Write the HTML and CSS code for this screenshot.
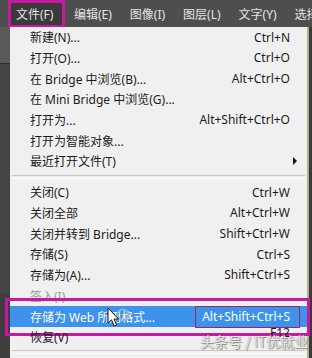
FILE: index.html
```html
<!DOCTYPE html>
<html>
<head>
<meta charset="utf-8">
<link rel="stylesheet" href="styles.css">
</head>
<body>
<div class="menubar">
  <div class="mb-item active">文件(F)</div>
  <div class="mb-item">编辑(E)</div>
  <div class="mb-item">图像(I)</div>
  <div class="mb-item">图层(L)</div>
  <div class="mb-item">文字(Y)</div>
  <div class="mb-item">选择</div>
</div>
<div class="main">
  <div class="leftstrip"><div class="ls-top"></div><div class="ls-mid"></div></div>
  <div class="menu">
    <div class="item"><span>新建(N)...</span><span class="sc">Ctrl+N</span></div>
    <div class="item"><span>打开(O)...</span><span class="sc">Ctrl+O</span></div>
    <div class="item"><span>在 Bridge 中浏览(B)...</span><span class="sc">Alt+Ctrl+O</span></div>
    <div class="item"><span>在 Mini Bridge 中浏览(G)...</span><span class="sc"></span></div>
    <div class="item"><span>打开为...</span><span class="sc">Alt+Shift+Ctrl+O</span></div>
    <div class="item"><span>打开为智能对象...</span><span class="sc"></span></div>
    <div class="item"><span>最近打开文件(T)</span><span class="arrow"></span></div>
    <div class="sep"></div>
    <div class="item"><span>关闭(C)</span><span class="sc">Ctrl+W</span></div>
    <div class="item"><span>关闭全部</span><span class="sc">Alt+Ctrl+W</span></div>
    <div class="item"><span>关闭并转到 Bridge...</span><span class="sc">Shift+Ctrl+W</span></div>
    <div class="item"><span>存储(S)</span><span class="sc">Ctrl+S</span></div>
    <div class="item"><span>存储为(A)...</span><span class="sc">Shift+Ctrl+S</span></div>
    <div class="item disabled"><span>签入(I)...</span><span class="sc"></span></div>
    <div class="item hl"><span>存储为 Web 所用格式...</span><span class="sc boxed">Alt+Shift+Ctrl+S</span>
      <svg class="cursor" width="26" height="24" viewBox="0 0 26 24">
        <circle cx="17" cy="8" r="5.5" fill="none" stroke="#9fb6cc" stroke-width="2.2" opacity="0.85"/>
        <path d="M2 1 L2 16 L5.5 12.8 L8.2 19 L10.6 18 L8 12 L12.6 12 Z" fill="#fff" stroke="#111" stroke-width="1"/>
      </svg>
    </div>
    <div class="item"><span>恢复(V)</span><span class="sc f12">F12</span></div>
    <div class="sep"></div>
  </div>
  <div class="rightstrip"></div>
</div>
<div class="watermark">头条号 / IT优就业</div>
</body>
</html>
```
FILE: styles.css
```css
* { box-sizing: border-box; }
html, body {
  margin: 0;
  padding: 0;
}
body {
  width: 312px;
  height: 358px;
  overflow: hidden;
  background: #3c3c3c;
  font-family: "Noto Sans", "Noto Sans CJK SC", sans-serif;
  font-size: 12px;
  position: relative;
}
.menubar {
  height: 27px;
  background: #4e4e4e;
  display: flex;
  align-items: stretch;
  padding-left: 8px;
  color: #e4e4e4;
}
.mb-item {
  display: flex;
  align-items: center;
  padding: 0 8.5px;
  margin-right: 1px;
  white-space: nowrap;
}
.mb-item.active {
  background: #3a3a3a;
  border: 3px solid #c8189f;
  border-bottom-width: 2px;
  padding: 0 9px 0 5px;
  margin-right: 0;
}
.main {
  display: flex;
  height: 331px;
}
.leftstrip {
  width: 10px;
  display: flex;
  flex-direction: column;
  background: #3e3e3e;
}
.ls-top {
  height: 36px;
  background: #5a5a5a;
}
.ls-mid {
  height: 230px;
  background: #444;
  border-top: 1px solid #2e2e2e;
}
.menu {
  width: 297px;
  background: #f0f0f0;
  color: #1b1b1b;
  display: flex;
  flex-direction: column;
}
.rightstrip {
  flex: 1;
  background: #3a3a3a;
  border-left: 2px solid #b4ae8a;
}
.item {
  height: 20.67px;
  flex: none;
  display: flex;
  align-items: center;
  justify-content: space-between;
  padding: 0 17px 0 20px;
  white-space: nowrap;
  position: relative;
}
.sc {
  font-family: "Noto Sans", sans-serif;
}
.disabled { color: #9a9a9a; }
.arrow {
  width: 0;
  height: 0;
  border-top: 4px solid transparent;
  border-bottom: 4px solid transparent;
  border-left: 4px solid #111;
  margin-right: -7px;
}
.sep {
  height: 10.3px;
  flex: none;
  display: flex;
  align-items: center;
  padding: 0 2px;
}
.sep::before {
  content: "";
  flex: 1;
  height: 2px;
  border-top: 1px solid #c9c9c9;
  border-bottom: 1px solid #fff;
}
.item.hl {
  height: 21.5px;
  background: #3d93ec;
  color: #fff;
  margin-bottom: -0.8px;
}
.item.hl::before {
  content: "";
  position: absolute;
  left: -5px;
  right: -3px;
  top: -8px;
  bottom: -9px;
  border: 3px solid #c8189f;
  pointer-events: none;
}
.boxed {
  border: 1.5px solid #a6235a;
  height: 22px;
  display: flex;
  align-items: center;
  padding: 0 9px 0 6px;
  margin-right: -10px;
}
.f12 {
  align-self: flex-start;
  line-height: 12px;
}
.cursor {
  position: absolute;
  left: 96px;
  top: 1px;
}
.watermark {
  position: absolute;
  left: 200px;
  top: 331px;
  font-family: "Noto Sans CJK SC", sans-serif;
  font-size: 14px;
  color: rgba(255,255,255,0.85);
  text-shadow: 0 0 1px #777, 1px 1px 1px #888;
  white-space: nowrap;
}
```
